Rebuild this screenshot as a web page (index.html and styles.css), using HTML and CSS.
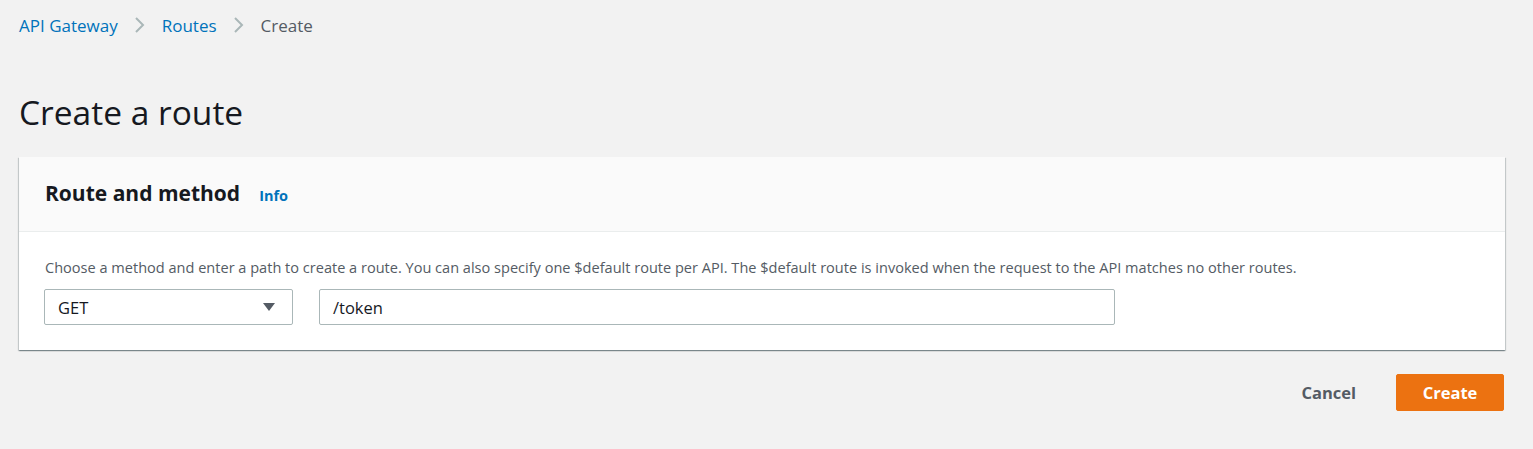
FILE: index.html
```html
<!DOCTYPE html>
<html lang="en">
<head>
<meta charset="utf-8">
<title>Create a route</title>
<link rel="stylesheet" href="styles.css">
</head>
<body>
<div class="page">
  <nav class="breadcrumbs">
    <a class="crumb link" href="#">API Gateway</a>
    <svg class="chev" width="12" height="18" viewBox="0 0 12 18"><path d="M2 2 L9 9 L2 16" fill="none" stroke="#aab7b8" stroke-width="2"/></svg>
    <a class="crumb link" href="#">Routes</a>
    <svg class="chev" width="12" height="18" viewBox="0 0 12 18"><path d="M2 2 L9 9 L2 16" fill="none" stroke="#aab7b8" stroke-width="2"/></svg>
    <span class="crumb current">Create</span>
  </nav>
  <h1 class="title">Create a route</h1>
  <section class="card">
    <div class="card-header">
      <h2 class="card-title">Route and method</h2>
      <a class="info" href="#">Info</a>
    </div>
    <div class="card-body">
      <p class="desc">Choose a method and enter a path to create a route. You can also specify one $default route per API. The $default route is invoked when the request to the API matches no other routes.</p>
      <div class="fields">
        <div class="select">
          <span>GET</span>
          <svg width="14" height="10" viewBox="0 0 14 10"><path d="M1 1 H13 L7 9 Z" fill="#545b64"/></svg>
        </div>
        <div class="input">/token</div>
      </div>
    </div>
  </section>
  <div class="actions">
    <button class="btn-cancel">Cancel</button>
    <button class="btn-primary">Create</button>
  </div>
</div>
</body>
</html>
```
FILE: styles.css
```css
* { box-sizing: border-box; }
html, body { margin: 0; padding: 0; }
body {
  background: #f2f2f2;
  font-family: "Open Sans", "Noto Sans", Arial, sans-serif;
  color: #16191f;
}
.page {
  padding: 11px 28px 0 19px;
}
.breadcrumbs {
  display: flex;
  align-items: center;
  gap: 16px;
  height: 28px;
  font-size: 17px;
}
.crumb { text-decoration: none; }
.link { color: #0073bb; }
.current { color: #545b64; }
.chev { margin: 0; }
.title {
  margin: 53px 0 0 0;
  font-size: 33.5px;
  font-weight: 400;
  line-height: 40px;
  color: #16191f;
}
.card {
  margin-top: 25px;
  background: #fff;
  box-shadow: 0 1px 1px 0 rgba(0,28,36,0.3), 1px 1px 1px 0 rgba(0,28,36,0.15), -1px 1px 1px 0 rgba(0,28,36,0.15);
}
.card-header {
  display: flex;
  align-items: baseline;
  gap: 19px;
  height: 75px;
  padding: 22px 26px 0 26px;
  background: #fafafa;
  border-bottom: 1px solid #eaeded;
}
.card-title {
  margin: 0;
  font-size: 21px;
  font-weight: 700;
  line-height: 28px;
}
.info {
  color: #0073bb;
  font-size: 14.5px;
  font-weight: 700;
  text-decoration: none;
}
.card-body {
  padding: 25px 26px 25px 25px;
}
.desc {
  margin: 0 0 12px 1px;
  font-size: 14.55px;
  line-height: 20px;
  color: #545b64;
}
.fields {
  display: flex;
  gap: 26px;
}
.select, .input {
  height: 36px;
  border: 1px solid #aab7b8;
  border-radius: 2px;
  background: #fff;
  font-size: 16.5px;
  display: flex;
  align-items: center;
  color: #16191f;
}
.select {
  width: 249px;
  justify-content: space-between;
  padding: 0 16px 0 13px;
}
.input {
  width: 796px;
  padding: 0 13px;
}
.actions {
  display: flex;
  justify-content: flex-end;
  align-items: center;
  gap: 24px;
  margin-top: 24px;
  padding-right: 1px;
}
.btn-cancel {
  background: transparent;
  border: none;
  font-family: inherit;
  font-size: 16.5px;
  font-weight: 700;
  color: #545b64;
  padding: 0 16px;
  height: 37px;
}
.btn-primary {
  background: #ec7211;
  border: 1px solid #ec7211;
  border-radius: 2px;
  color: #fff;
  font-family: inherit;
  font-size: 16.5px;
  font-weight: 700;
  width: 108px;
  height: 37px;
}
```
